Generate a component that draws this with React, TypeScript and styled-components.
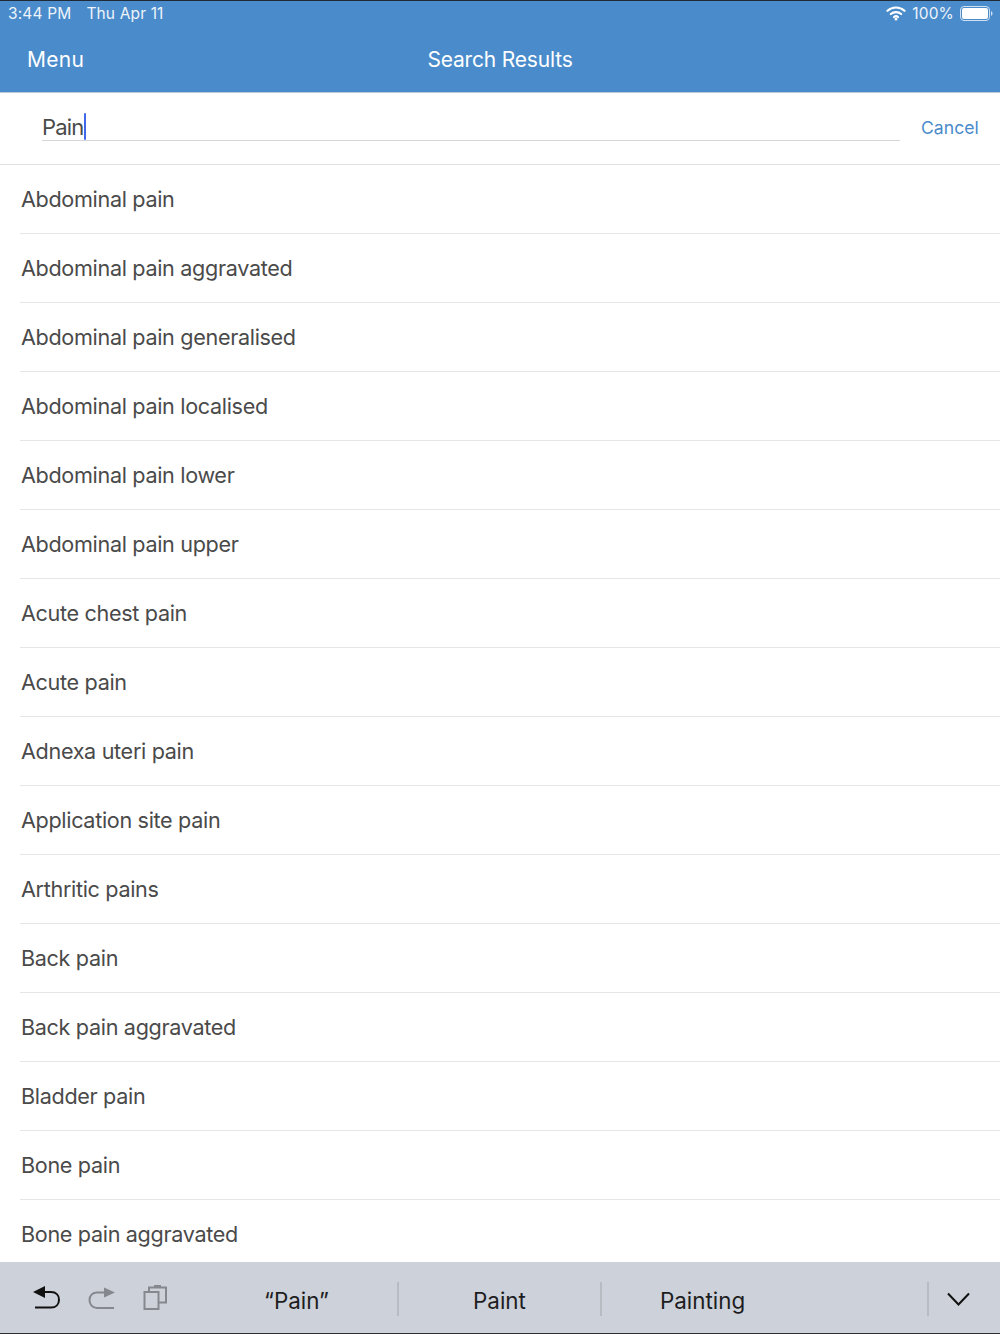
import React from "react";
import styled, { createGlobalStyle } from "styled-components";

const results = [
    "Abdominal pain",
    "Abdominal pain aggravated",
    "Abdominal pain generalised",
    "Abdominal pain localised",
    "Abdominal pain lower",
    "Abdominal pain upper",
    "Acute chest pain",
    "Acute pain",
    "Adnexa uteri pain",
    "Application site pain",
    "Arthritic pains",
    "Back pain",
    "Back pain aggravated",
    "Bladder pain",
    "Bone pain",
    "Bone pain aggravated",
];

const GlobalStyle = createGlobalStyle`
    html, body {
        margin: 0;
        padding: 0;
        background: #fff;
    }
    body {
        font-family: "Inter", "Liberation Sans", sans-serif;
        -webkit-font-smoothing: antialiased;
    }
`;

const Page = styled.div`
    width: 1000px;
    height: 1334px;
    display: flex;
    flex-direction: column;
    overflow: hidden;
    background: #fff;
`;

const Header = styled.header`
    height: 93px;
    flex: none;
    box-sizing: border-box;
    border-top: 1px solid #1f2a36;
    border-bottom: 1px solid #b9c9d9;
    background: #4a8bcb;
    color: #fff;
    display: flex;
    flex-direction: column;
`;

const StatusBar = styled.div`
    height: 24px;
    display: flex;
    align-items: center;
    justify-content: space-between;
    padding: 0 7px 0 8px;
    font-size: 15.5px;
    letter-spacing: 0.15px;
    color: #eef4fa;
`;

const StatusGroup = styled.div<{ $gap: number }>`
    display: flex;
    align-items: center;
    gap: ${props => props.$gap}px;
`;

const NavBar = styled.div`
    flex: 1;
    display: grid;
    grid-template-columns: 1fr auto 1fr;
    align-items: center;
    padding: 2px 27px 0;
    font-size: 21px;
    letter-spacing: 0.3px;
`;

const NavTitle = styled.span`
    letter-spacing: -0.18px;
`;

const SearchRow = styled.div`
    height: 72px;
    flex: none;
    box-sizing: border-box;
    border-bottom: 1px solid #dfdfe1;
    display: flex;
    padding-left: 42px;
`;

const SearchField = styled.div`
    width: 858px;
    height: 48px;
    box-sizing: border-box;
    border-bottom: 1px solid #d6d6d8;
    display: flex;
    align-items: flex-end;
    font-size: 22px;
    line-height: 26px;
    letter-spacing: -0.8px;
    color: #4a4a4a;
`;

const Caret = styled.span`
    width: 2px;
    height: 27px;
    margin-left: 0.5px;
    border-radius: 1px;
    background: #3f67e8;
`;

const CancelButton = styled.button`
    border: 0;
    background: none;
    padding: 0;
    margin: 11px 0 0 21px;
    height: 46px;
    font: inherit;
    font-size: 17.6px;
    color: #4a8bcb;
`;

const ResultList = styled.ul`
    flex: 1;
    margin: 0;
    padding: 0 0 0 20px;
    list-style: none;
    overflow: hidden;
`;

const ResultItem = styled.li`
    height: 69px;
    box-sizing: border-box;
    border-bottom: 1px solid #e6e6e8;
    padding-left: 1px;
    display: flex;
    align-items: center;
    font-size: 21.6px;
    letter-spacing: -0.33px;
    color: #4a4a4a;
`;

const Keyboard = styled.div`
    height: 72px;
    flex: none;
    box-sizing: border-box;
    border-bottom: 1px solid #2a2d33;
    background: #cdd1d9;
    display: flex;
    align-items: center;
    padding-top: 4px;
`;

const ToolGroup = styled.div`
    width: 196px;
    flex: none;
    display: flex;
    align-items: center;
    gap: 27px;
    padding-left: 31px;
    margin-bottom: 3px;
    box-sizing: border-box;
`;

const Suggestion = styled.div<{ $width: number; $inset?: number }>`
    width: ${props => props.$width}px;
    height: 34px;
    flex: none;
    box-sizing: border-box;
    margin-bottom: 2px;
    padding: 3px 0 0 ${props => props.$inset ?? 0}px;
    display: flex;
    align-items: center;
    justify-content: ${props => (props.$inset ? "flex-start" : "center")};
    font-size: 22.4px;
    color: #1d1d1f;
    border-right: 2px solid #b7bbc2;
`;

const Dismiss = styled.div`
    flex: 1;
    display: flex;
    justify-content: center;
    padding-right: 13px;
    margin-bottom: 2px;
`;

const WifiIcon = () => (
    <svg width="20" height="16" viewBox="0 0 20 16" fill="none" stroke="#fff" strokeLinecap="round">
        <path d="M1.5 5.8C6.2 1.4 13.8 1.4 18.5 5.8" strokeWidth="2.2" />
        <path d="M4.8 9C7.7 6.4 12.3 6.4 15.2 9" strokeWidth="2.2" />
        <path d="M8 12C9.2 11 10.8 11 12 12" strokeWidth="2.2" />
        <circle cx="10" cy="14" r="1.5" fill="#fff" stroke="none" />
    </svg>
);

const BatteryIcon = () => (
    <svg width="33" height="15" viewBox="0 0 33 15" fill="none">
        <rect x="0.5" y="0.5" width="29" height="14" rx="3.5" stroke="#cfe0f1" />
        <rect x="2" y="2" width="26" height="11" rx="2" fill="#fff" />
        <path d="M31 5.2c1 .3 1.5 1.2 1.5 2.3s-.5 2-1.5 2.3z" fill="#cfe0f1" />
    </svg>
);

const UndoIcon = () => (
    <svg width="30" height="26" viewBox="0 0 30 26" fill="none" stroke="#111" strokeWidth="2">
        <path d="M6 7H20C25 7 28 10.2 28 14.7S25 22.5 20 22.5H4" />
        <path d="M14 1V13L2 7Z" fill="#111" stroke="none" />
    </svg>
);

const RedoIcon = () => (
    <svg width="28" height="26" viewBox="0 0 28 26" fill="none" stroke="#85888e" strokeWidth="2">
        <path d="M20 7.5H9C4.5 7.5 1.5 10.7 1.5 15S4.5 23 9 23H26" />
        <path d="M16 2.5V12.5L27 7.5Z" fill="#85888e" stroke="none" />
    </svg>
);

const PasteIcon = () => (
    <svg width="25" height="26" viewBox="0 0 25 26" fill="none" stroke="#85888e" strokeWidth="2">
        <rect x="1.5" y="7" width="14" height="17" />
        <path d="M6 6.5V2.5H23V17.5H16" />
        <rect x="11" y="0" width="7" height="3" fill="#85888e" stroke="none" />
    </svg>
);

const ChevronIcon = () => (
    <svg width="23" height="14" viewBox="0 0 23 14" fill="none" stroke="#111" strokeWidth="2">
        <path d="M1 1.5L11.5 12.5L22 1.5" />
    </svg>
);

export default function App() {
    return (
        <Page>
            <GlobalStyle />
            <Header>
                <StatusBar>
                    <StatusGroup $gap={15}>
                        <span>3:44 PM</span>
                        <span>Thu Apr 11</span>
                    </StatusGroup>
                    <StatusGroup $gap={6}>
                        <WifiIcon />
                        <span>100%</span>
                        <BatteryIcon />
                    </StatusGroup>
                </StatusBar>
                <NavBar>
                    <span>Menu</span>
                    <NavTitle>Search Results</NavTitle>
                </NavBar>
            </Header>
            <SearchRow>
                <SearchField>
                    Pain
                    <Caret />
                </SearchField>
                <CancelButton>Cancel</CancelButton>
            </SearchRow>
            <ResultList>
                {results.map(name => (
                    <ResultItem key={name}>{name}</ResultItem>
                ))}
            </ResultList>
            <Keyboard>
                <ToolGroup>
                    <UndoIcon />
                    <RedoIcon />
                    <PasteIcon />
                </ToolGroup>
                <Suggestion $width={203}>“Pain”</Suggestion>
                <Suggestion $width={203}>Paint</Suggestion>
                <Suggestion $width={327} $inset={58}>Painting</Suggestion>
                <Dismiss>
                    <ChevronIcon />
                </Dismiss>
            </Keyboard>
        </Page>
    );
}
